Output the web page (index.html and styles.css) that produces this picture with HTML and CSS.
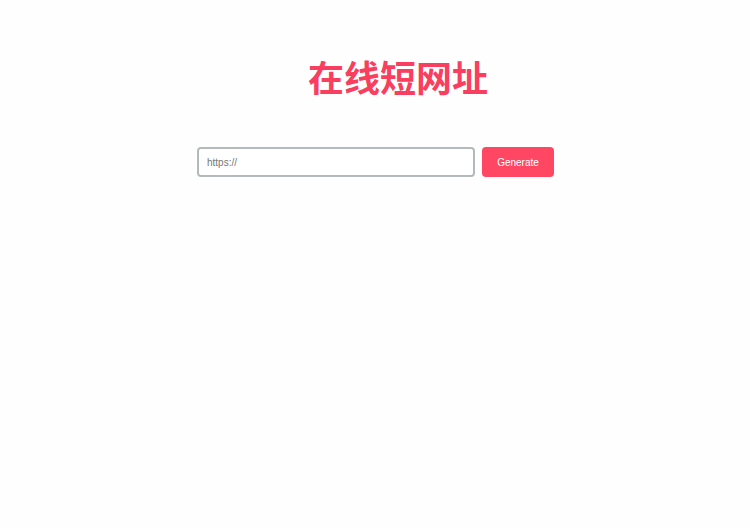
FILE: index.html
```html
<!DOCTYPE html>
<html lang="zh-CN">
<head>
<meta charset="utf-8">
<title>在线短网址</title>
<link rel="stylesheet" href="styles.css">
</head>
<body>
<main class="page">
  <h1 class="title">在线短网址</h1>
  <form class="form">
    <input class="url" type="text" placeholder="https://" aria-label="URL">
    <button class="generate" type="button">Generate</button>
  </form>
</main>
</body>
</html>
```
FILE: styles.css
```css
* {
  box-sizing: border-box;
}

body {
  margin: 0;
  background: #fefefe;
  font-family: "Liberation Sans", "Noto Sans CJK SC", sans-serif;
}

.page {
  max-width: 358px;
  margin: 0 auto;
  padding-top: 54px;
}

.title {
  margin: 0 0 41px;
  padding-left: 46px;
  color: #fa3e5f;
  font-size: 36px;
  line-height: 52px;
  font-weight: 700;
  text-align: center;
}

.form {
  display: flex;
  gap: 7px;
  padding-left: 1px;
}

.url {
  flex: 1;
  min-width: 0;
  height: 30px;
  padding: 0 8px;
  border: 2px solid #b4babb;
  border-radius: 4px;
  background: #fff;
  color: #555;
  font: 10px "Liberation Sans", sans-serif;
}

.url::placeholder {
  color: #757575;
}

.generate {
  width: 72px;
  height: 30px;
  padding: 0;
  border: 0;
  border-radius: 4px;
  background: #ff4763;
  color: #fff;
  font: 10px "Liberation Sans", sans-serif;
}
```
